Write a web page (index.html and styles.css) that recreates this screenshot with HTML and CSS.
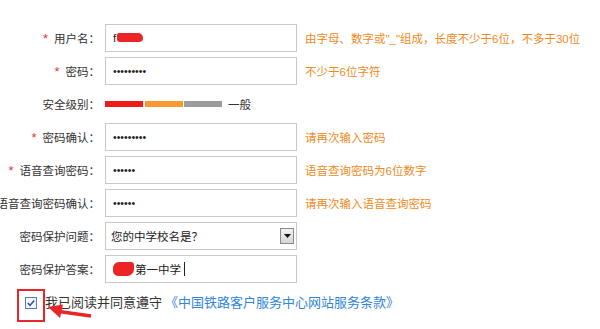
FILE: index.html
```html
<!DOCTYPE html>
<html lang="zh-CN">
  <head>
    <meta charset="UTF-8" />
    <meta name="viewport" content="width=device-width, initial-scale=1.0" />
    <title>注册</title>
    <link rel="stylesheet" href="styles.css">
  </head>
  <body>
    <form class="reg">
      <div class="row">
        <label class="label"><span><span class="star">*</span>用户名：</span></label>
        <div class="field">f<span class="blot blot-user"></span></div>
        <span class="tip">由字母、数字或"_"组成，长度不少于6位，不多于30位</span>
      </div>

      <div class="row">
        <label class="label"><span><span class="star">*</span>密码：</span></label>
        <input class="field" type="password" value="123456789">
        <span class="tip">不少于6位字符</span>
      </div>

      <div class="row">
        <label class="label"><span>安全级别：</span></label>
        <div class="level">
          <span class="bar bar-red"></span>
          <span class="bar bar-orange"></span>
          <span class="bar bar-gray"></span>
          <span class="level-text">一般</span>
        </div>
      </div>

      <div class="row">
        <label class="label"><span><span class="star">*</span>密码确认：</span></label>
        <input class="field" type="password" value="123456789">
        <span class="tip">请再次输入密码</span>
      </div>

      <div class="row">
        <label class="label"><span><span class="star">*</span>语音查询密码：</span></label>
        <input class="field" type="password" value="123456">
        <span class="tip">语音查询密码为6位数字</span>
      </div>

      <div class="row">
        <label class="label"><span>语音查询密码确认：</span></label>
        <input class="field" type="password" value="123456">
        <span class="tip">请再次输入语音查询密码</span>
      </div>

      <div class="row">
        <label class="label"><span>密码保护问题：</span></label>
        <div class="field select">
          <span>您的中学校名是？</span>
          <span class="select-btn">
            <svg width="7" height="4" viewBox="0 0 7 4"><path d="M0 0h7L3.5 4z" fill="#111"/></svg>
          </span>
        </div>
      </div>

      <div class="row">
        <label class="label"><span>密码保护答案：</span></label>
        <div class="field"><span class="blot blot-answer"></span>第一中学<span class="caret"></span></div>
      </div>

      <div class="agree">
        <span class="mark">
          <svg width="12" height="12" viewBox="0 0 12 12">
            <rect x="0.5" y="0.5" width="11" height="11" fill="#f4f6fa" stroke="#5a7ca8"/>
            <path d="M2.8 6l2.2 2.4 4.2-5" fill="none" stroke="#2a4fc0" stroke-width="1.6"/>
          </svg>
        </span>
        <span class="agree-text">我已阅读并同意遵守</span>
        <a class="terms" href="#">《中国铁路客户服务中心网站服务条款》</a>
        <svg class="arrow" width="45" height="18" viewBox="0 0 45 18">
          <path d="M12 8.5L44 13" stroke="#e8262a" stroke-width="3.5"/>
          <path d="M1 4L16 1.5 13 15z" fill="#e8262a"/>
        </svg>
      </div>
    </form>
  </body>
</html>
```

FILE: styles.css
```css
* {
  margin: 0;
  padding: 0;
  box-sizing: border-box;
}
body {
  background: #fff;
  font-family: "Liberation Sans", "Noto Sans CJK SC", sans-serif;
  font-size: 11.5px;
  color: #333;
  overflow: hidden;
}
.reg {
  padding-top: 21px;
}
.row {
  display: flex;
  align-items: center;
  height: 33px;
}
.label {
  display: flex;
  justify-content: flex-end;
  width: 100px;
  flex-shrink: 0;
  white-space: nowrap;
}
.star {
  color: #e3353a;
  font-size: 13px;
  margin-right: 6px;
}
.field {
  display: flex;
  align-items: center;
  flex-shrink: 0;
  width: 192px;
  height: 28px;
  margin-left: 5px;
  padding: 0 7px;
  border: 1px solid #c9c9c9;
  background: #fff;
  font-family: "Liberation Sans", "Noto Sans CJK SC", sans-serif;
  font-size: 11.5px;
  color: #222;
  outline: none;
}
input.field {
  font-size: 10.5px;
  color: #222;
}
.tip {
  margin-left: 8px;
  color: #ef8a22;
  white-space: nowrap;
}
.blot {
  display: inline-block;
  background: #ec2424;
}
.blot-user {
  width: 26px;
  height: 9px;
  margin-left: 1px;
  border-radius: 2px 5px 4px 3px;
}
.blot-answer {
  width: 21px;
  height: 14px;
  margin-right: 1px;
  border-radius: 6px 3px 7px 5px;
}
.caret {
  display: inline-block;
  width: 1px;
  height: 14px;
  margin-left: 3px;
  background: #222;
}
.level {
  display: flex;
  align-items: center;
  margin-left: 5px;
}
.bar {
  height: 6px;
  width: 38px;
}
.bar-red {
  background: #ee1a1a;
  margin-right: 2px;
}
.bar-orange {
  background: #f7992e;
  margin-right: 1px;
}
.bar-gray {
  background: #9c9c9c;
}
.level-text {
  margin-left: 6px;
  color: #333;
}
.select {
  justify-content: space-between;
  padding: 0 2px 0 5px;
}
.select-btn {
  display: flex;
  align-items: center;
  justify-content: center;
  width: 14px;
  height: 16px;
  border: 1px solid #8a8a8a;
  background: linear-gradient(#f2f2f2, #d6d6d6);
}
.agree {
  position: relative;
  display: flex;
  align-items: flex-start;
  margin-top: 4px;
  font-size: 13px;
  line-height: 18px;
  color: #333;
}
.mark {
  display: flex;
  align-items: center;
  justify-content: center;
  width: 28px;
  height: 33px;
  margin-left: 17px;
  padding-bottom: 5px;
  border: 2px solid #e8262a;
}
.agree-text,
.terms {
  padding-top: 5px;
}
.terms {
  margin-left: 3px;
  color: #2f86d9;
  text-decoration: none;
}
.arrow {
  position: absolute;
  left: 47px;
  top: 14px;
}
```
